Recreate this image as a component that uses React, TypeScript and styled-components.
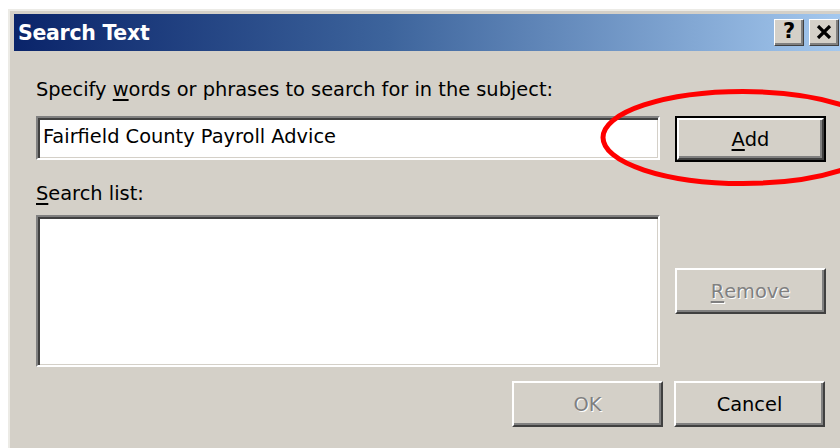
import React from "react";
import styled, { createGlobalStyle } from "styled-components";

const GlobalStyle = createGlobalStyle`
    html, body {
        margin: 0;
        padding: 0;
        background: #ffffff;
        overflow: hidden;
    }
    body {
        width: 840px;
        height: 448px;
        position: relative;
        font-family: "DejaVu Sans", sans-serif;
    }
`;

const Window = styled.div`
    position: relative;
    margin: 9px 0 0 8px;
    width: 840px;
    height: 460px;
    box-sizing: border-box;
    border-top: 2px solid #ecebe6;
    border-left: 2px solid #ecebe6;
    padding: 3px 0 0 4px;
    background: #d4d0c8;
`;

const TitleBar = styled.div`
    display: flex;
    align-items: center;
    height: 37px;
    padding: 0 9px 0 4px;
    background: linear-gradient(to right, #0a246a 0%, #3d649c 45%, #a6caf0 100%);
`;

const Title = styled.span`
    flex: 1;
    color: #ffffff;
    font-family: "DejaVu Sans", sans-serif;
    font-weight: bold;
    font-size: 20.5px;
    letter-spacing: -0.3px;
`;

const CaptionButton = styled.div`
    width: 30px;
    height: 27px;
    margin-left: 5px;
    box-sizing: border-box;
    display: flex;
    align-items: center;
    justify-content: center;
    background: #d4d0c8;
    border: 1px solid;
    border-color: #ffffff #404040 #404040 #ffffff;
    box-shadow: inset -2px -2px #808080;
    color: #000000;
    font-family: "DejaVu Sans", sans-serif;
    font-weight: bold;
    font-size: 21px;
    line-height: 1;
    padding-bottom: 2px;
`;

const Body = styled.div`
    padding: 28px 0 0 22px;
`;

const Label = styled.div<{ $gapAbove?: number; $gapBelow?: number }>`
    height: 22px;
    line-height: 22px;
    font-size: 19.4px;
    color: #000000;
    margin-top: ${(p) => p.$gapAbove ?? 0}px;
    margin-bottom: ${(p) => p.$gapBelow ?? 0}px;
    white-space: nowrap;
`;

const Mnemonic = styled.span`
    text-decoration: underline;
    text-decoration-thickness: 2px;
    text-underline-offset: 3px;
`;

const Row = styled.div`
    display: flex;
    align-items: flex-start;
    gap: 15px;
`;

const Sunken = styled.div<{ $height: number }>`
    width: 624px;
    height: ${(p) => p.$height}px;
    box-sizing: border-box;
    background: #ffffff;
    border: 2px solid;
    border-color: #808080 #ffffff #ffffff #808080;
    box-shadow: inset 2px 2px #404040, inset -1px -1px #d4d0c8;
    padding: 0 0 0 5px;
    font-size: 19.4px;
    line-height: 37px;
    color: #000000;
    white-space: nowrap;
`;

const Button = styled.div<{ $disabled?: boolean; $default?: boolean }>`
    width: 151px;
    height: 46px;
    box-sizing: border-box;
    display: flex;
    align-items: center;
    justify-content: center;
    background: #d4d0c8;
    font-size: 19.4px;
    border: 2px solid;
    border-color: #ffffff #404040 #404040 #ffffff;
    box-shadow: inset -2px -2px #808080;
    color: ${(p) => (p.$disabled ? "#808080" : "#000000")};
    text-shadow: ${(p) => (p.$disabled ? "1px 1px #ffffff" : "none")};
    ${(p) =>
        p.$default &&
        `
        outline: 2px solid #000000;
        outline-offset: -2px;
        border-width: 4px;
        box-shadow: inset -2px -2px #808080;
    `}
`;

const SideColumn = styled.div`
    display: flex;
    flex-direction: column;
    padding-top: 53px;
`;

const Footer = styled.div`
    display: flex;
    justify-content: flex-end;
    gap: 11px;
    width: 789px;
    margin-top: 14px;
`;

const Highlight = styled.svg`
    position: absolute;
    left: 0;
    top: 0;
    pointer-events: none;
`;

const CloseGlyph = () => (
    <svg width="16" height="14" viewBox="0 0 16 14">
        <path d="M2 1 L14 13 M14 1 L2 13" stroke="#000000" strokeWidth="3.2" />
    </svg>
);

const App = () => {
    return (
        <>
            <GlobalStyle />
            <Window>
                <TitleBar>
                    <Title>Search Text</Title>
                    <CaptionButton>?</CaptionButton>
                    <CaptionButton>
                        <CloseGlyph />
                    </CaptionButton>
                </TitleBar>
                <Body>
                    <Label $gapBelow={15}>
                        Specify <Mnemonic>w</Mnemonic>ords or phrases to search for in the subject:
                    </Label>
                    <Row>
                        <Sunken $height={44}>Fairfield County Payroll Advice</Sunken>
                        <Button $default>
                            <Mnemonic>A</Mnemonic>dd
                        </Button>
                    </Row>
                    <Label $gapAbove={21} $gapBelow={10}>
                        <Mnemonic>S</Mnemonic>earch list:
                    </Label>
                    <Row>
                        <Sunken $height={152} />
                        <SideColumn>
                            <Button $disabled>
                                <Mnemonic>R</Mnemonic>emove
                            </Button>
                        </SideColumn>
                    </Row>
                    <Footer>
                        <Button $disabled>OK</Button>
                        <Button>Cancel</Button>
                    </Footer>
                </Body>
            </Window>
            <Highlight width="840" height="448" viewBox="0 0 840 448">
                <ellipse cx="743" cy="137.5" rx="140" ry="46" fill="none" stroke="#ff0000" strokeWidth="5" />
            </Highlight>
        </>
    );
};

export default App;
